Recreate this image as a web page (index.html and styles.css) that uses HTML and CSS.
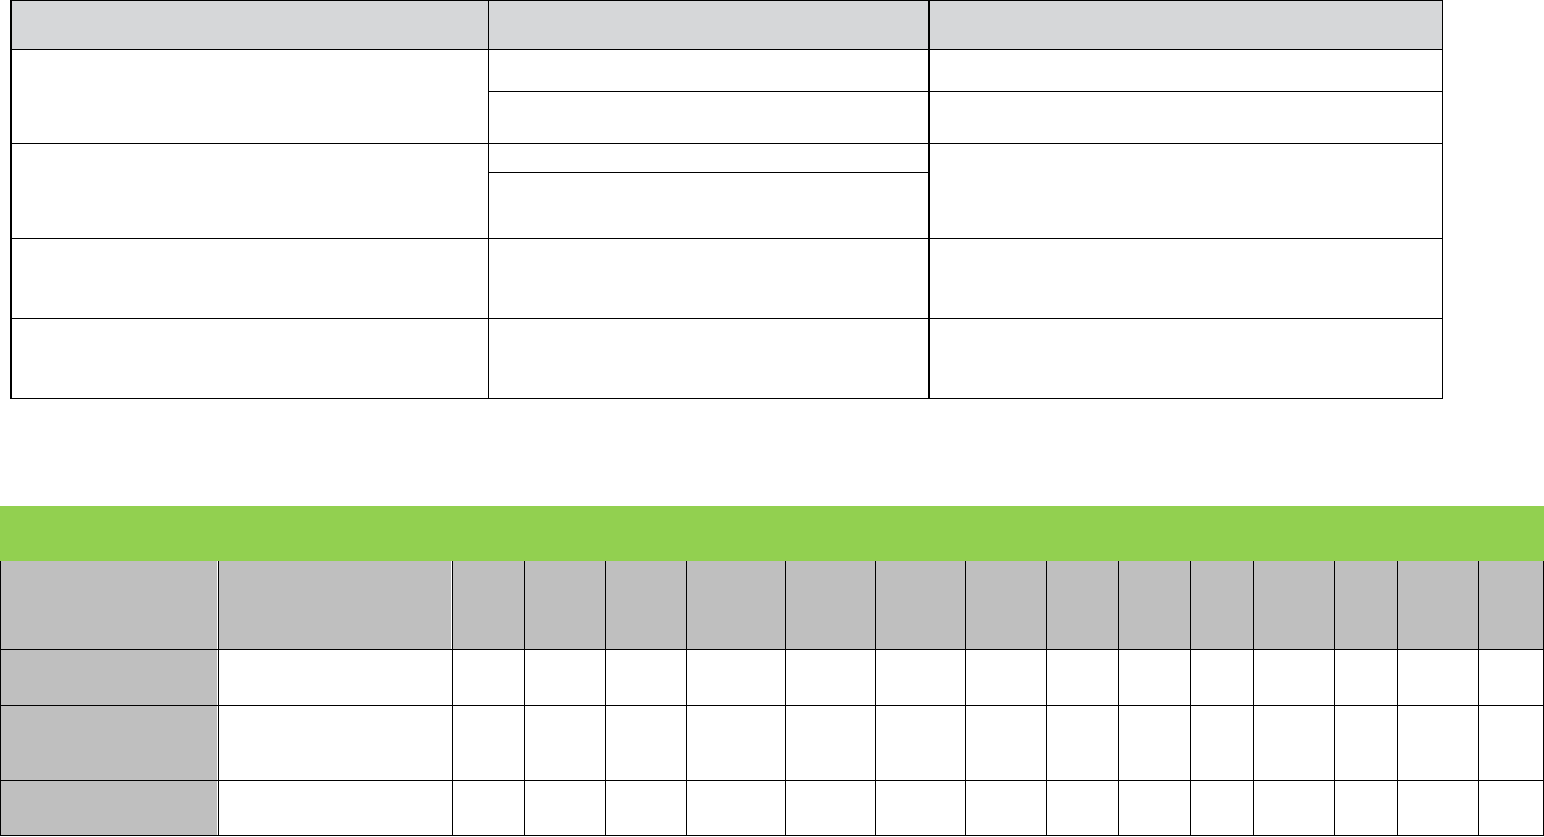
FILE: index.html
```html
<!DOCTYPE html>
<html lang="es">
<head>
  <meta charset="UTF-8">
  <meta name="viewport" content="width=device-width, initial-scale=1.0">
  <title>Tablas</title>
  <link rel="stylesheet" href="styles.css">
</head>
<body>
  <!-- Tabla resumen -->
  <table class="resumen">
    <colgroup>
      <col class="c-uno">
      <col class="c-dos">
      <col class="c-tres">
    </colgroup>
    <tr class="r-cab">
      <th></th>
      <th class="medio"></th>
      <th></th>
    </tr>
    <tr class="r-1a">
      <td rowspan="2"></td>
      <td class="medio"></td>
      <td></td>
    </tr>
    <tr class="r-1b">
      <td class="medio"></td>
      <td></td>
    </tr>
    <tr class="r-2a">
      <td rowspan="2"></td>
      <td class="medio"></td>
      <td rowspan="2"></td>
    </tr>
    <tr class="r-2b">
      <td class="medio"></td>
    </tr>
    <tr class="r-3">
      <td></td>
      <td class="medio"></td>
      <td></td>
    </tr>
    <tr class="r-3">
      <td></td>
      <td class="medio"></td>
      <td></td>
    </tr>
  </table>

  <!-- Tabla de detalle -->
  <table class="detalle">
    <colgroup>
      <col class="d-1">
      <col class="d-2">
      <col class="d-72">
      <col class="d-81">
      <col class="d-81">
      <col class="d-99">
      <col class="d-90">
      <col class="d-90">
      <col class="d-81">
      <col class="d-72">
      <col class="d-72">
      <col class="d-63">
      <col class="d-81">
      <col class="d-63">
      <col class="d-81">
      <col class="d-65">
    </colgroup>
    <tr class="banda">
      <td colspan="16"></td>
    </tr>
    <tr class="cabecera">
      <th class="primera"></th>
      <th class="segunda"></th>
      <th></th><th></th><th></th><th></th><th></th><th></th>
      <th></th><th></th><th></th><th></th><th></th><th></th><th></th><th></th>
    </tr>
    <tr class="fila-1">
      <td class="primera"></td>
      <td></td><td></td><td></td><td></td><td></td><td></td><td></td>
      <td></td><td></td><td></td><td></td><td></td><td></td><td></td><td></td>
    </tr>
    <tr class="fila-2">
      <td class="primera"></td>
      <td></td><td></td><td></td><td></td><td></td><td></td><td></td>
      <td></td><td></td><td></td><td></td><td></td><td></td><td></td><td></td>
    </tr>
    <tr class="fila-3">
      <td class="primera"></td>
      <td></td><td></td><td></td><td></td><td></td><td></td><td></td>
      <td></td><td></td><td></td><td></td><td></td><td></td><td></td><td></td>
    </tr>
  </table>
</body>
</html>
```
FILE: styles.css
```css
body {
  font-family: "Liberation Sans", Arial, sans-serif;
  background-color: #fff;
  color: #000;
  margin: 0;
  padding: 0;
}
table {
  border-collapse: separate;
  border-spacing: 0;
  table-layout: fixed;
}
th,
td {
  padding: 0;
  box-sizing: border-box;
}

/* tabla resumen */
.resumen {
  width: 1433px;
  margin-left: 10px;
  border-left: 2px solid #000;
  border-top: 1px solid #000;
}
.c-uno {
  width: 477px;
}
.c-dos {
  width: 441px;
}
.c-tres {
  width: 513px;
}
.resumen th,
.resumen td {
  border-right: 1px solid #000;
  border-bottom: 1px solid #000;
}
.resumen th {
  background-color: #d6d7d9;
}
.resumen .medio {
  border-right-width: 2px;
}
.r-cab {
  height: 49px;
}
.r-1a {
  height: 42px;
}
.r-1b {
  height: 52px;
}
.r-2a {
  height: 29px;
}
.r-2b {
  height: 66px;
}
.r-3 {
  height: 80px;
}

/* tabla detalle */
.detalle {
  width: 1544px;
  margin-top: 107px;
}
.d-1 {
  width: 219px;
}
.d-2 {
  width: 234px;
}
.d-63 {
  width: 63px;
}
.d-65 {
  width: 65px;
}
.d-72 {
  width: 72px;
}
.d-81 {
  width: 81px;
}
.d-90 {
  width: 90px;
}
.d-99 {
  width: 99px;
}
.banda {
  height: 55px;
}
.banda td {
  background-color: #92d050;
}
.detalle th,
.detalle tr:not(.banda) td {
  border-right: 1px solid #000;
  border-bottom: 1px solid #000;
}
.detalle th {
  background-color: #bfbfbf;
}
.detalle .primera {
  border-left: 1px solid #000;
  background-color: #bfbfbf;
  box-shadow: inset -1px 0 0 #fff;
}
.detalle .segunda {
  box-shadow: inset -1px 0 0 #fff;
}
.cabecera {
  height: 89px;
}
.fila-1 {
  height: 56px;
}
.fila-2 {
  height: 75px;
}
.fila-3 {
  height: 55px;
}
```
